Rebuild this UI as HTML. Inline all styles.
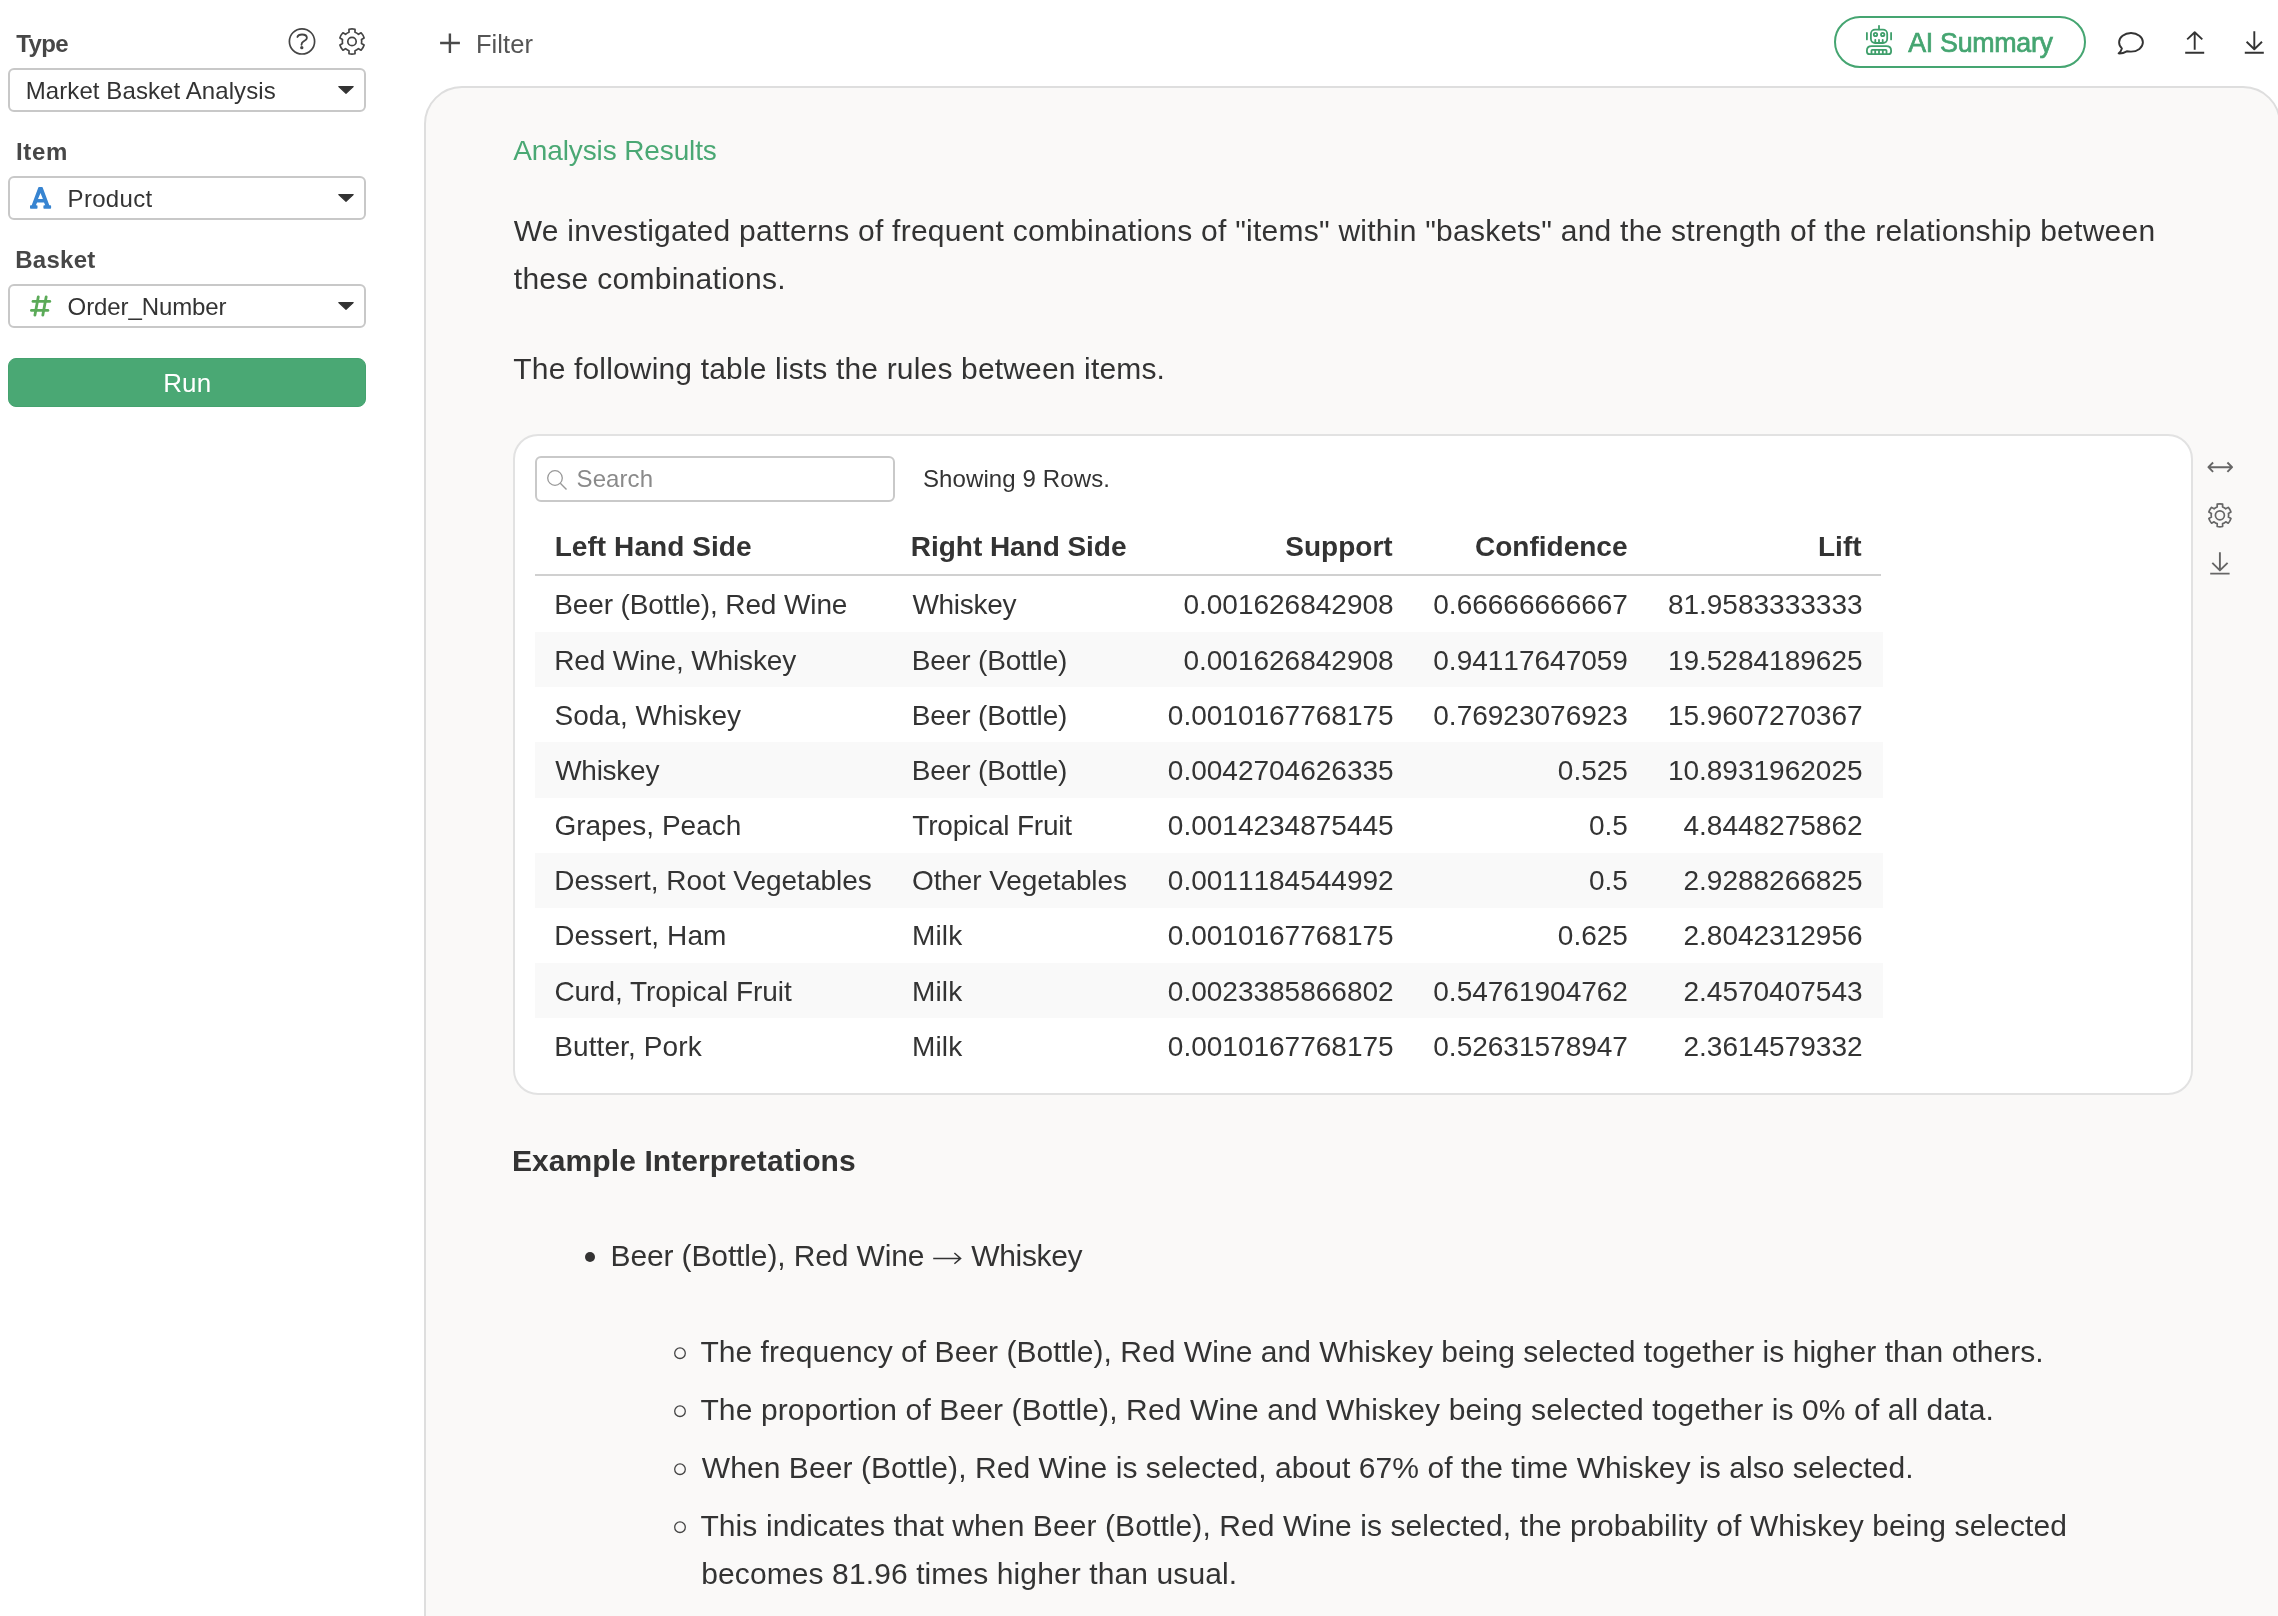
<!DOCTYPE html>
<html><head><meta charset="utf-8"><title>Analytics</title>
<style>
html,body{margin:0;padding:0;}
body{width:2278px;height:1616px;overflow:hidden;background:#fff;font-family:"Liberation Sans",sans-serif;position:relative;color:#333;}
.t{position:absolute;white-space:nowrap;}
.sel{position:absolute;left:8px;width:354px;height:40px;border:2px solid #c8c8c8;border-radius:6px;background:#fff;}
svg{position:absolute;left:0;top:0;overflow:visible;}
#panel{position:absolute;left:424px;top:86px;width:1857px;height:1600px;border:2px solid #dedede;border-radius:38px;background:#faf9f8;box-sizing:border-box;}
#card{position:absolute;left:513px;top:434px;width:1680px;height:661px;border:2px solid #e2e2e2;border-radius:25px;background:#fff;box-sizing:border-box;}
#search{position:absolute;left:535px;top:456px;width:360px;height:46px;border:2px solid #c9c9c9;border-radius:6px;background:#fff;box-sizing:border-box;}
.row{position:absolute;left:535px;width:1348px;height:55.2px;background:#f9f9f9;}
#hline{position:absolute;left:535px;top:574px;width:1346px;height:2px;background:#d0d0d0;}
.dot{position:absolute;border-radius:50%;}
#wrap{position:absolute;left:0;top:0;width:2278px;height:1616px;will-change:transform;}
</style></head><body><div id="wrap">

<div class="t" style="left:16.30px;top:28.70px;font-size:24px;line-height:30px;font-weight:700;color:#474747;letter-spacing:-0.612px;">Type</div>
<div class="t" style="left:15.90px;top:136.50px;font-size:24px;line-height:30px;font-weight:700;color:#474747;letter-spacing:0.739px;">Item</div>
<div class="t" style="left:15.20px;top:244.50px;font-size:24px;line-height:30px;font-weight:700;color:#474747;letter-spacing:0.280px;">Basket</div>
<div class="sel" style="top:68px"></div>
<div class="sel" style="top:176px"></div>
<div class="sel" style="top:284px"></div>
<div class="t" style="left:25.73px;top:76.30px;font-size:24px;line-height:30px;color:#333;letter-spacing:0.091px;">Market Basket Analysis</div>
<div class="t" style="left:67.62px;top:184.20px;font-size:24px;line-height:30px;color:#333;letter-spacing:0.297px;">Product</div>
<div class="t" style="left:67.58px;top:292.20px;font-size:24px;line-height:30px;color:#333;letter-spacing:-0.101px;">Order_Number</div>
<div style="position:absolute;left:8px;top:358px;width:358px;height:49px;border-radius:8px;background:#4aa874;border:1px solid #45a26f;box-sizing:border-box;"></div>
<div class="t" style="left:163.17px;top:367.00px;font-size:26px;line-height:32px;color:#fff;letter-spacing:0.147px;">Run</div>
<div class="t" style="left:475.91px;top:27.90px;font-size:25.5px;line-height:32px;color:#555;letter-spacing:0.090px;">Filter</div>
<div style="position:absolute;left:1834px;top:16px;width:248px;height:48px;border:2px solid #45a571;border-radius:26px;"></div>
<div class="t" style="left:1908.20px;top:26.00px;font-size:26.8px;line-height:34px;color:#45a571;letter-spacing:-0.292px;-webkit-text-stroke:0.7px #45a571;">AI Summary</div>
<div id="panel"></div>
<div class="t" style="left:513.30px;top:132.80px;font-size:28px;line-height:35px;color:#4aa874;letter-spacing:-0.122px;">Analysis Results</div>
<div class="t" style="left:513.80px;top:211.70px;font-size:30px;line-height:38px;color:#333;letter-spacing:0.248px;">We investigated patterns of frequent combinations of "items" within "baskets" and the strength of the relationship between</div>
<div class="t" style="left:513.80px;top:259.50px;font-size:30px;line-height:38px;color:#333;letter-spacing:0.277px;">these combinations.</div>
<div class="t" style="left:513.33px;top:349.50px;font-size:30px;line-height:38px;color:#333;letter-spacing:0.162px;">The following table lists the rules between items.</div>
<div id="card"></div>
<div id="search"></div>
<div class="t" style="left:576.55px;top:463.90px;font-size:24px;line-height:30px;color:#8a8a8a;letter-spacing:0.091px;">Search</div>
<div class="t" style="left:922.95px;top:463.90px;font-size:24px;line-height:30px;color:#333;letter-spacing:0.114px;">Showing 9 Rows.</div>
<div class="t" style="left:554.65px;top:529.00px;font-size:28px;line-height:35px;font-weight:700;color:#333;letter-spacing:0.072px;">Left Hand Side</div>
<div class="t" style="left:910.85px;top:529.00px;font-size:28px;line-height:35px;font-weight:700;color:#333;letter-spacing:-0.041px;">Right Hand Side</div>
<div class="t" style="left:1285.33px;top:529.00px;font-size:28px;line-height:35px;font-weight:700;color:#333;">Support</div>
<div class="t" style="left:1475.04px;top:529.00px;font-size:28px;line-height:35px;font-weight:700;color:#333;">Confidence</div>
<div class="t" style="left:1818.01px;top:529.00px;font-size:28px;line-height:35px;font-weight:700;color:#333;">Lift</div>
<div id="hline"></div>
<div class="t" style="left:554.21px;top:587.00px;font-size:28px;line-height:35px;color:#333;letter-spacing:-0.111px;">Beer (Bottle), Red Wine</div>
<div class="t" style="left:912.40px;top:587.00px;font-size:28px;line-height:35px;color:#333;letter-spacing:-0.282px;">Whiskey</div>
<div class="t" style="left:1183.42px;top:587.00px;font-size:28px;line-height:35px;color:#333;font-kerning:none;">0.001626842908</div>
<div class="t" style="left:1433.29px;top:587.00px;font-size:28px;line-height:35px;color:#333;font-kerning:none;">0.66666666667</div>
<div class="t" style="left:1667.89px;top:587.00px;font-size:28px;line-height:35px;color:#333;font-kerning:none;">81.9583333333</div>
<div class="row" style="top:632.0px"></div>
<div class="t" style="left:554.21px;top:643.00px;font-size:28px;line-height:35px;color:#333;letter-spacing:-0.144px;">Red Wine, Whiskey</div>
<div class="t" style="left:911.81px;top:643.00px;font-size:28px;line-height:35px;color:#333;letter-spacing:-0.128px;">Beer (Bottle)</div>
<div class="t" style="left:1183.42px;top:643.00px;font-size:28px;line-height:35px;color:#333;font-kerning:none;">0.001626842908</div>
<div class="t" style="left:1433.29px;top:643.00px;font-size:28px;line-height:35px;color:#333;font-kerning:none;">0.94117647059</div>
<div class="t" style="left:1667.89px;top:643.00px;font-size:28px;line-height:35px;color:#333;font-kerning:none;">19.5284189625</div>
<div class="t" style="left:554.62px;top:698.00px;font-size:28px;line-height:35px;color:#333;letter-spacing:-0.022px;">Soda, Whiskey</div>
<div class="t" style="left:911.81px;top:698.00px;font-size:28px;line-height:35px;color:#333;letter-spacing:-0.128px;">Beer (Bottle)</div>
<div class="t" style="left:1167.84px;top:698.00px;font-size:28px;line-height:35px;color:#333;font-kerning:none;">0.0010167768175</div>
<div class="t" style="left:1433.29px;top:698.00px;font-size:28px;line-height:35px;color:#333;font-kerning:none;">0.76923076923</div>
<div class="t" style="left:1667.89px;top:698.00px;font-size:28px;line-height:35px;color:#333;font-kerning:none;">15.9607270367</div>
<div class="row" style="top:742.4px"></div>
<div class="t" style="left:555.20px;top:753.00px;font-size:28px;line-height:35px;color:#333;letter-spacing:-0.265px;">Whiskey</div>
<div class="t" style="left:911.81px;top:753.00px;font-size:28px;line-height:35px;color:#333;letter-spacing:-0.128px;">Beer (Bottle)</div>
<div class="t" style="left:1167.84px;top:753.00px;font-size:28px;line-height:35px;color:#333;font-kerning:none;">0.0042704626335</div>
<div class="t" style="left:1557.87px;top:753.00px;font-size:28px;line-height:35px;color:#333;font-kerning:none;">0.525</div>
<div class="t" style="left:1667.89px;top:753.00px;font-size:28px;line-height:35px;color:#333;font-kerning:none;">10.8931962025</div>
<div class="t" style="left:554.39px;top:808.00px;font-size:28px;line-height:35px;color:#333;letter-spacing:0.018px;">Grapes, Peach</div>
<div class="t" style="left:912.36px;top:808.00px;font-size:28px;line-height:35px;color:#333;letter-spacing:-0.199px;">Tropical Fruit</div>
<div class="t" style="left:1167.84px;top:808.00px;font-size:28px;line-height:35px;color:#333;font-kerning:none;">0.0014234875445</div>
<div class="t" style="left:1589.01px;top:808.00px;font-size:28px;line-height:35px;color:#333;font-kerning:none;">0.5</div>
<div class="t" style="left:1683.46px;top:808.00px;font-size:28px;line-height:35px;color:#333;font-kerning:none;">4.8448275862</div>
<div class="row" style="top:852.8px"></div>
<div class="t" style="left:554.21px;top:863.00px;font-size:28px;line-height:35px;color:#333;letter-spacing:0.006px;">Dessert, Root Vegetables</div>
<div class="t" style="left:911.99px;top:863.00px;font-size:28px;line-height:35px;color:#333;letter-spacing:-0.092px;">Other Vegetables</div>
<div class="t" style="left:1167.84px;top:863.00px;font-size:28px;line-height:35px;color:#333;font-kerning:none;">0.0011184544992</div>
<div class="t" style="left:1589.01px;top:863.00px;font-size:28px;line-height:35px;color:#333;font-kerning:none;">0.5</div>
<div class="t" style="left:1683.46px;top:863.00px;font-size:28px;line-height:35px;color:#333;font-kerning:none;">2.9288266825</div>
<div class="t" style="left:554.21px;top:918.00px;font-size:28px;line-height:35px;color:#333;letter-spacing:0.099px;">Dessert, Ham</div>
<div class="t" style="left:912.01px;top:918.00px;font-size:28px;line-height:35px;color:#333;letter-spacing:0.161px;">Milk</div>
<div class="t" style="left:1167.84px;top:918.00px;font-size:28px;line-height:35px;color:#333;font-kerning:none;">0.0010167768175</div>
<div class="t" style="left:1557.87px;top:918.00px;font-size:28px;line-height:35px;color:#333;font-kerning:none;">0.625</div>
<div class="t" style="left:1683.46px;top:918.00px;font-size:28px;line-height:35px;color:#333;font-kerning:none;">2.8042312956</div>
<div class="row" style="top:963.2px"></div>
<div class="t" style="left:554.39px;top:974.00px;font-size:28px;line-height:35px;color:#333;letter-spacing:-0.035px;">Curd, Tropical Fruit</div>
<div class="t" style="left:912.01px;top:974.00px;font-size:28px;line-height:35px;color:#333;letter-spacing:0.161px;">Milk</div>
<div class="t" style="left:1167.84px;top:974.00px;font-size:28px;line-height:35px;color:#333;font-kerning:none;">0.0023385866802</div>
<div class="t" style="left:1433.29px;top:974.00px;font-size:28px;line-height:35px;color:#333;font-kerning:none;">0.54761904762</div>
<div class="t" style="left:1683.46px;top:974.00px;font-size:28px;line-height:35px;color:#333;font-kerning:none;">2.4570407543</div>
<div class="t" style="left:554.21px;top:1029.00px;font-size:28px;line-height:35px;color:#333;letter-spacing:0.106px;">Butter, Pork</div>
<div class="t" style="left:912.01px;top:1029.00px;font-size:28px;line-height:35px;color:#333;letter-spacing:0.161px;">Milk</div>
<div class="t" style="left:1167.84px;top:1029.00px;font-size:28px;line-height:35px;color:#333;font-kerning:none;">0.0010167768175</div>
<div class="t" style="left:1433.29px;top:1029.00px;font-size:28px;line-height:35px;color:#333;font-kerning:none;">0.52631578947</div>
<div class="t" style="left:1683.46px;top:1029.00px;font-size:28px;line-height:35px;color:#333;font-kerning:none;">2.3614579332</div>
<div class="t" style="left:511.92px;top:1141.70px;font-size:30px;line-height:38px;font-weight:700;color:#333;letter-spacing:0.092px;">Example Interpretations</div>
<div class="dot" style="left:585px;top:1252.3px;width:10px;height:10px;background:#333"></div>
<div class="t" style="left:610.56px;top:1236.80px;font-size:30px;line-height:38px;color:#333;letter-spacing:-0.129px;">Beer (Bottle), Red Wine</div>
<div class="t" style="left:971.30px;top:1236.80px;font-size:30px;line-height:38px;color:#333;letter-spacing:-0.342px;">Whiskey</div>
<div class="t" style="left:700.43px;top:1332.50px;font-size:30px;line-height:38px;color:#333;letter-spacing:0.042px;">The frequency of Beer (Bottle), Red Wine and Whiskey being selected together is higher than others.</div>
<div class="t" style="left:700.43px;top:1390.50px;font-size:30px;line-height:38px;color:#333;letter-spacing:0.116px;">The proportion of Beer (Bottle), Red Wine and Whiskey being selected together is 0% of all data.</div>
<div class="t" style="left:701.80px;top:1448.50px;font-size:30px;line-height:38px;color:#333;letter-spacing:0.070px;">When Beer (Bottle), Red Wine is selected, about 67% of the time Whiskey is also selected.</div>
<div class="t" style="left:700.43px;top:1506.50px;font-size:30px;line-height:38px;color:#333;letter-spacing:0.090px;">This indicates that when Beer (Bottle), Red Wine is selected, the probability of Whiskey being selected</div>
<div class="t" style="left:701.23px;top:1554.50px;font-size:30px;line-height:38px;color:#333;letter-spacing:0.105px;">becomes 81.96 times higher than usual.</div>
<svg width="2278" height="1616" viewBox="0 0 2278 1616">
<circle cx="302" cy="41.4" r="12.6" fill="none" stroke="#444" stroke-width="1.7"/>
<path d="M297.4,37 C297.9,35.3 299.8,34.5 302,34.5 C304.8,34.5 306.9,35.9 306.9,37.9 C306.9,39.6 305.2,40.4 303.7,41.3 C302.2,42.2 301.5,43 301.5,44.8" fill="none" stroke="#444" stroke-width="1.8" stroke-linecap="round"/>
<circle cx="301.8" cy="47.7" r="1.65" fill="#444"/>
<path d="M355.00,32.28L355.00,29.26A12.60,12.60 0 0 0 349.00,29.26L349.00,32.28A9.70,9.70 0 0 0 345.51,34.29L342.90,32.78A12.60,12.60 0 0 0 339.90,37.98L342.51,39.49A9.70,9.70 0 0 0 342.51,43.51L339.90,45.02A12.60,12.60 0 0 0 342.90,50.22L345.51,48.71A9.70,9.70 0 0 0 349.00,50.72L349.00,53.74A12.60,12.60 0 0 0 355.00,53.74L355.00,50.72A9.70,9.70 0 0 0 358.49,48.71L361.10,50.22A12.60,12.60 0 0 0 364.10,45.02L361.49,43.51A9.70,9.70 0 0 0 361.49,39.49L364.10,37.98A12.60,12.60 0 0 0 361.10,32.78L358.49,34.29A9.70,9.70 0 0 0 355.00,32.28Z" fill="none" stroke="#444" stroke-width="1.7" stroke-linejoin="round"/><circle cx="352" cy="41.5" r="4.2" fill="none" stroke="#444" stroke-width="1.7"/>
<path d="M338.8,86.6 L353.2,86.6 L346,93.3 Z" fill="#333" stroke="#333" stroke-width="1.2" stroke-linejoin="round"/>
<path d="M338.8,194.6 L353.2,194.6 L346,201.3 Z" fill="#333" stroke="#333" stroke-width="1.2" stroke-linejoin="round"/>
<path d="M338.8,302.6 L353.2,302.6 L346,309.3 Z" fill="#333" stroke="#333" stroke-width="1.2" stroke-linejoin="round"/>
<path fill-rule="evenodd" fill="#3784d1" d="M38.4,187.3 Q38.7,187 39.2,187 L41.8,187 Q42.3,187 42.6,187.3 L49.3,205.3 L50.3,205.3 Q51.1,205.3 51.1,206.1 L51.1,207.9 Q51.1,208.7 50.3,208.7 L44.2,208.7 Q43.4,208.7 43.4,207.9 L43.4,206.1 Q43.4,205.3 44.2,205.3 L45.2,205.3 L44,202.4 L37.1,202.4 L35.9,205.3 L36.7,205.3 Q37.5,205.3 37.5,206.1 L37.5,207.9 Q37.5,208.7 36.7,208.7 L30.8,208.7 Q30,208.7 30,207.9 L30,206.1 Q30,205.3 30.8,205.3 L31.7,205.3 Z M40.5,192.9 L42.9,199 L38,199 Z"/>
<g stroke="#5baa58" stroke-width="2.8" stroke-linecap="round" fill="none"><path d="M33,301.4 L49.8,301.4"/><path d="M31.4,310.4 L47.9,310.4"/><path d="M38.3,296.8 L34.9,315.2"/><path d="M46.2,296.8 L42.8,315.2"/></g>
<path d="M440.1,43 L459.9,43 M449.9,33.4 L449.9,53" stroke="#4a4a4a" stroke-width="2.4" fill="none"/>
<g stroke="#3f9f6b" stroke-width="1.8" fill="none" stroke-linecap="round"><path d="M1879,25.8 L1879,29.4"/><rect x="1870.9" y="29.7" width="16.3" height="13.3" rx="4.2"/><path d="M1866.9,33 L1866.9,39.4 M1891.1,33 L1891.1,39.4"/><circle cx="1875.5" cy="34.5" r="1.7"/><circle cx="1882.7" cy="34.5" r="1.7"/><path d="M1875.3,39.8 L1875.3,42.6 M1879,39.8 L1879,42.6 M1882.7,39.8 L1882.7,42.6"/><path d="M1871.6,46.2 L1886.4,46.2 Q1891.1,46.2 1891.1,50.6 L1891.1,51.4 Q1891.1,54.1 1888.4,54.1 L1869.6,54.1 Q1866.9,54.1 1866.9,51.4 L1866.9,50.6 Q1866.9,46.2 1871.6,46.2 Z"/><path d="M1871.5,54 L1871.5,50.6 Q1871.5,49.8 1872.3,49.8 L1885.7,49.8 Q1886.5,49.8 1886.5,50.6 L1886.5,54"/><path d="M1875.2,50 L1875.2,54 M1879,50 L1879,54 M1882.8,50 L1882.8,54"/></g>
<path d="M2126.8,51.3 C2124.5,52.6 2121.5,53.6 2118.6,53.4 C2120.2,52 2121.4,50.2 2121.9,48.4 C2120.1,46.8 2119.1,44.6 2119.1,42.3 C2119.1,37.1 2124.4,33 2131,33 C2137.6,33 2142.9,37.1 2142.9,42.3 C2142.9,47.5 2137.6,51.6 2131,51.6 C2129.5,51.6 2128.1,51.5 2126.8,51.3 Z" fill="none" stroke="#333" stroke-width="1.9" stroke-linejoin="round"/>
<path d="M2194.7,49.8 L2194.7,32 M2187.2,39.4 L2194.7,32.2 L2202.3,39.4 M2185.2,52.8 L2204.2,52.8" fill="none" stroke="#333" stroke-width="1.9" stroke-linejoin="round"/>
<path d="M2254.3,31.3 L2254.3,49 M2246.6,41.8 L2254.3,49.3 L2262,41.8 M2244.8,52.8 L2263.8,52.8" fill="none" stroke="#333" stroke-width="1.9" stroke-linejoin="round"/>
<circle cx="555" cy="478" r="7.3" fill="none" stroke="#999" stroke-width="1.3"/><path d="M560.3,483.3 L566.5,489.5" stroke="#999" stroke-width="1.4" fill="none"/>
<path d="M2208.6,467.2 L2231.9,467.2 M2213.1,462.5 L2208.4,467.2 L2213.1,471.9 M2227.4,462.5 L2232.1,467.2 L2227.4,471.9" fill="none" stroke="#666" stroke-width="1.9" stroke-linejoin="round"/>
<path d="M2222.60,507.03L2222.60,504.12A11.50,11.50 0 0 0 2217.20,504.12L2217.20,507.03A8.70,8.70 0 0 0 2214.09,508.83L2211.57,507.37A11.50,11.50 0 0 0 2208.87,512.05L2211.39,513.50A8.70,8.70 0 0 0 2211.39,517.10L2208.87,518.55A11.50,11.50 0 0 0 2211.57,523.23L2214.09,521.77A8.70,8.70 0 0 0 2217.20,523.57L2217.20,526.48A11.50,11.50 0 0 0 2222.60,526.48L2222.60,523.57A8.70,8.70 0 0 0 2225.71,521.77L2228.23,523.23A11.50,11.50 0 0 0 2230.93,518.55L2228.41,517.10A8.70,8.70 0 0 0 2228.41,513.50L2230.93,512.05A11.50,11.50 0 0 0 2228.23,507.37L2225.71,508.83A8.70,8.70 0 0 0 2222.60,507.03Z" fill="none" stroke="#666" stroke-width="1.7" stroke-linejoin="round"/><circle cx="2219.9" cy="515.3" r="4.5" fill="none" stroke="#666" stroke-width="1.7"/>
<path d="M2219.9,552.3 L2219.9,570 M2212.3,562.9 L2219.9,570.4 L2227.6,562.9 M2210.2,573.6 L2229.6,573.6" fill="none" stroke="#666" stroke-width="1.9" stroke-linejoin="round"/>
<path d="M933.2,1258.4 L960.2,1258.4 M954.4,1253 L960.6,1258.4 L954.4,1263.8" fill="none" stroke="#333" stroke-width="1.5"/>
<circle cx="680.0" cy="1353.2" r="5.3" fill="none" stroke="#444" stroke-width="1.3"/>
<circle cx="680.0" cy="1411.2" r="5.3" fill="none" stroke="#444" stroke-width="1.3"/>
<circle cx="680.0" cy="1469.2" r="5.3" fill="none" stroke="#444" stroke-width="1.3"/>
<circle cx="680.0" cy="1527.2" r="5.3" fill="none" stroke="#444" stroke-width="1.3"/>
</svg>
</div></body></html>
